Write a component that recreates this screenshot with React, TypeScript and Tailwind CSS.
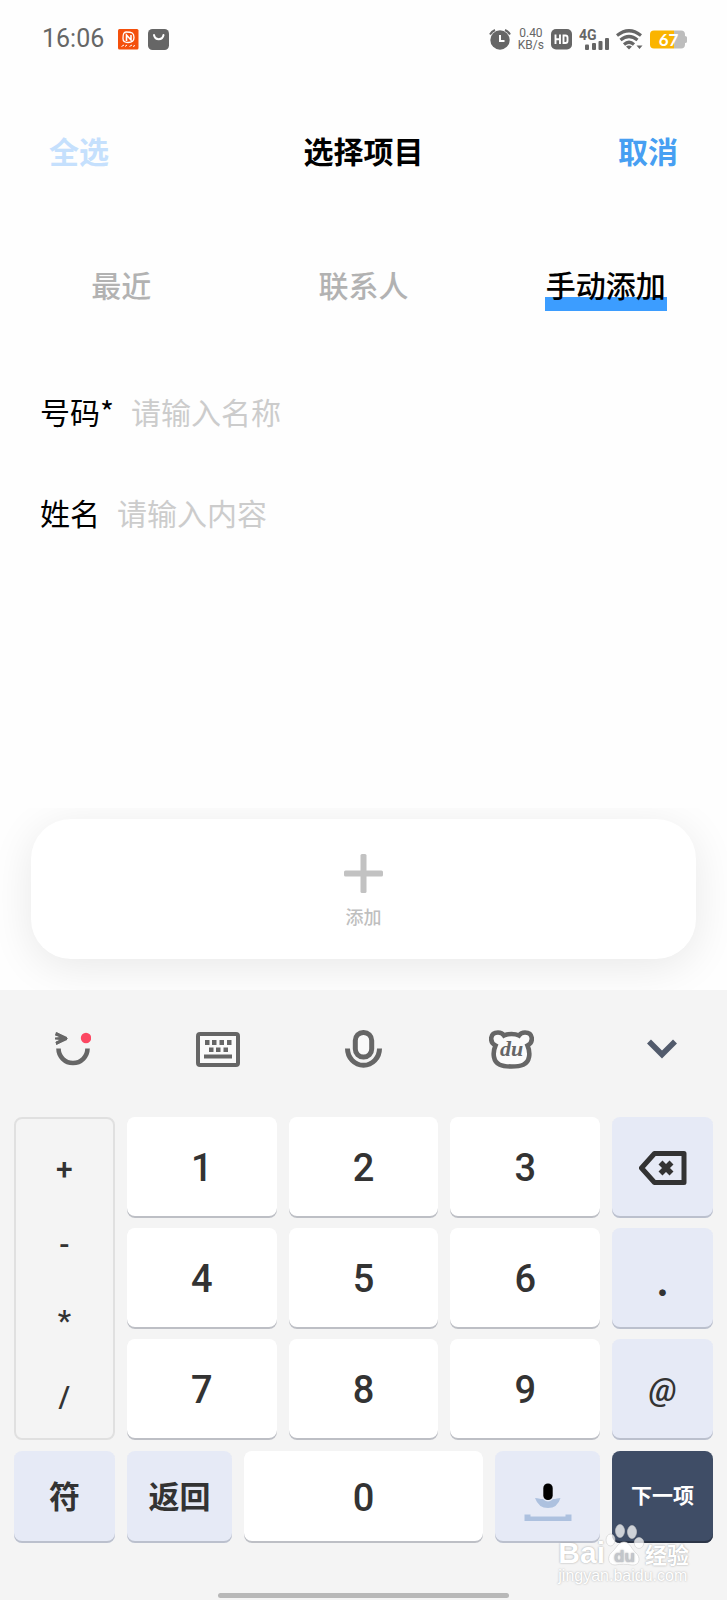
import type { ReactNode } from "react"
import clsx from "clsx"

const tabs = ["最近", "联系人", "手动添加"]
const digits = ["1", "2", "3", "4", "5", "6", "7", "8", "9"]
const operators = ["+", "-", "*", "/"]

type KeyProps = {
  children: ReactNode
  label?: string
  tone?: "light" | "tinted" | "dark"
  className?: string
}

function Key({ children, label, tone = "light", className }: KeyProps) {
  return (
    <button
      type="button"
      aria-label={label}
      className={clsx(
        "flex items-center justify-center rounded-lg",
        tone === "light" && "bg-white text-[#333] shadow-[inset_0_-2px_0_#bdbfc5]",
        tone === "tinted" && "bg-[#e6eaf6] text-[#333] shadow-[inset_0_-2px_0_#bbc0cd]",
        tone === "dark" && "bg-[#3f4d66] text-white shadow-[inset_0_-2px_0_#2c3547]",
        className,
      )}
    >
      {children}
    </button>
  )
}

function StatusBar() {
  return (
    <div className="flex h-[78px] items-center justify-between pl-[42px] pr-10 text-[#666]">
      <div className="flex items-center">
        <span className="font-[Roboto,sans-serif] text-[25px]">16:06</span>
        <svg className="ml-3.5" width="21" height="21" viewBox="0 0 21 21" fill="none">
          <rect width="20.5" height="20.5" rx="1.5" fill="#f4500c" />
          <path d="M8 3C5 3 5 7 5 9.500S7 13.500 10 13.500 16 13 16 8.500 14 3 8 3Z" stroke="#fff" strokeWidth="1.3" />
          <path d="M8.500 12V6L13 11V6" stroke="#fff" strokeWidth="1.6" />
          <path d="M3.500 17.500L6 16M7 17.500L9 16M11.500 17.500L14 16M15 17.500L17 16.500" stroke="#fff" strokeWidth="1" />
        </svg>
        <svg className="ml-[9px]" width="21" height="21" viewBox="0 0 21 21" fill="none">
          <rect width="21" height="21" rx="4.500" fill="#666" />
          <path d="M6 6C7 11.500 14.500 11.500 15.500 6" stroke="#fff" strokeWidth="2" strokeLinecap="round" />
        </svg>
      </div>
      <div className="flex items-center gap-[7px]">
        <svg width="22" height="21" viewBox="0 0 22 21" fill="none">
          <circle cx="11" cy="11" r="9.700" fill="#666" />
          <path d="M1 5.500Q2.500 2.500 6 1M21 5.500Q19.500 2.500 16 1" stroke="#666" strokeWidth="2" />
          <path d="M11 6v6h4.500" stroke="#fff" strokeWidth="2" />
        </svg>
        <span className="flex flex-col items-center font-[Roboto,sans-serif] text-[12px] leading-[12px]">
          <span>0.40</span>
          <span>KB/s</span>
        </span>
        <svg width="21" height="21" viewBox="0 0 21 21" fill="none">
          <rect width="21" height="20.500" rx="5" fill="#666" />
          <path d="M4.500 5.500v9.500M9 5.500v9.500M4.500 10.200H9M12.500 6.500h2q2 0 2 2v3.500q0 2-2 2h-2z" stroke="#fff" strokeWidth="1.900" />
        </svg>
        <svg width="30" height="28" viewBox="0 -4 30 28" fill="#666">
          <text x="0" y="11" fontFamily="Roboto, sans-serif" fontSize="14" fontWeight="700">4G</text>
          <rect x="6" y="15.500" width="4" height="5.500" rx="1" />
          <rect x="13" y="14" width="4" height="7" rx="1" />
          <rect x="19.500" y="12" width="4" height="9" rx="1" />
          <rect x="26" y="9" width="4" height="12" rx="1" />
        </svg>
        <svg width="27" height="21" viewBox="0 0 27 21" fill="none" stroke="#666" strokeWidth="3.200">
          <path d="M1 6.500Q13 -3 25 6.500M4.500 11Q13 4 21.500 11M8 15.500Q13 11 18 15.500" />
          <path d="M10 17.500q3-2 6 0l-3 3zM20.500 16.500h6l-3 3.500z" fill="#666" stroke="none" />
        </svg>
        <span className="relative flex h-[19px] w-[37px] items-center">
          <svg className="absolute inset-0" width="37" height="19" viewBox="0 0 37 19">
            <path d="M4 0.500H24V18.500H4Q0 18.500 0 14.500V4.500Q0 0.500 4 0.500Z" fill="#fab400" />
            <path d="M24 0.500H31Q35 0.500 35 4.500V6q2 0 2 1.500v4q0 1.500-2 1.500V14.500Q35 18.500 31 18.500H24Z" fill="#bdbdbd" />
          </svg>
          <span className="relative w-full text-center font-[Lato,sans-serif] text-[17px] font-bold leading-[19px] text-white">67</span>
        </span>
      </div>
    </div>
  )
}

function Toolbar() {
  return (
    <div className="grid h-[118px] grid-cols-[145fr_145fr_147fr_149fr_141fr] items-center text-[#666]">
      <button type="button" aria-label="表情" className="flex justify-center">
        <svg width="36" height="34" viewBox="0 0 36 34" fill="none">
          <path d="M1 0L12 5v3L1 13V9.500L5 8 0 7.500V5.500L5 5 0 3.500Z" fill="#666" />
          <path d="M1 1.500L10 6.500 1 11.500" stroke="#666" strokeWidth="3" />
          <circle cx="31" cy="6" r="5.200" fill="#fc4762" />
          <path d="M3.500 16.500a14.500 14.500 0 0 0 29 0" stroke="#666" strokeWidth="4.600" />
        </svg>
      </button>
      <button type="button" aria-label="键盘" className="flex justify-center">
        <svg width="44" height="35" viewBox="0 0 44 35" fill="#666">
          <rect x="2" y="2" width="40" height="31" rx="2" fill="#fafafa" stroke="#666" strokeWidth="4" />
          <path d="M9 8h4.500v5H9zM16 8h4.500v5H16zM23.500 8H28v5h-4.500zM31 8h4.500v5H31zM13 15.500h4.500v4.500H13zM20 15.500h4.500v4.500H20zM27.500 15.500H32v4.500h-4.500zM8 22.500h28v4H8z" />
        </svg>
      </button>
      <button type="button" aria-label="语音" className="flex justify-center">
        <svg width="37" height="38" viewBox="0 0 37 38" fill="none" stroke="#666" strokeWidth="5">
          <rect x="10.300" y="2.500" width="16.400" height="24.500" rx="8" fill="#fafafa" />
          <path d="M2.500 18.500a16 16.800 0 0 0 32 0" />
        </svg>
      </button>
      <button type="button" aria-label="百度输入法" className="flex justify-center">
        <svg width="45" height="39" viewBox="0 0 45 39">
          <path
            d="M6.500 15.500C0 12 1 2.500 9 2.500 12 2.500 14 4 15 5.500 19 3.500 26 3.500 30 5.500 31 4 33 2.500 36 2.500 44 2.500 45 12 38.500 15.500 40 19 41 22 40 27 38.500 35 32 36.500 22.500 36.500 13 36.500 6.500 35 5 27 4 22 5 19 6.500 15.500Z"
            fill="#fafafa"
            stroke="#666"
            strokeWidth="4.600"
          />
          <text x="22.500" y="26" textAnchor="middle" fill="#666" fontFamily="Liberation Serif, serif" fontSize="22" fontStyle="italic" fontWeight="700">du</text>
        </svg>
      </button>
      <button type="button" aria-label="收起键盘" className="flex justify-end pr-[50px]">
        <svg width="30" height="20" viewBox="0 0 30 20" fill="none">
          <path d="M2 2.500L15 15.500 28 2.500" stroke="#525b6c" strokeWidth="5.600" />
        </svg>
      </button>
    </div>
  )
}

function Keyboard() {
  return (
    <section className="bg-[#f4f4f4]">
      <Toolbar />
      <div className="grid grid-cols-[101fr_474fr_101fr] gap-x-3 px-3.5 pt-[9px] font-[Roboto,'Noto_Sans_CJK_SC',sans-serif]">
        <div className="grid grid-rows-4 rounded-lg border-2 border-[#e0e0e0] pb-1 pt-3 text-[30px] font-medium text-[#333]">
          {operators.map((op) => (
            <button key={op} type="button">
              {op}
            </button>
          ))}
        </div>
        <div className="grid auto-rows-[101px] grid-cols-3 gap-x-3 gap-y-2.5 text-[38px] font-medium">
          {digits.map((d) => (
            <Key key={d} className="pt-0.5">{d}</Key>
          ))}
        </div>
        <div className="grid auto-rows-[101px] gap-y-2.5 text-[32px] font-medium">
          <Key tone="tinted" label="删除">
            <svg width="48" height="34" viewBox="0 0 48 34" fill="none" stroke="#333" strokeWidth="5">
              <path d="M15.500 2.500L2.500 17 15.500 31.500H45V2.500Z" strokeLinejoin="round" />
              <path d="M21.500 11.500l11 11M32.500 11.500l-11 11" strokeWidth="5.600" />
            </svg>
          </Key>
          <Key tone="tinted" className="font-[Lato,sans-serif] text-[44px] font-bold">.</Key>
          <Key tone="tinted" className="italic">@</Key>
        </div>
      </div>
      <div className="grid h-[103px] grid-cols-[101fr_105fr_239fr_105fr_101fr] gap-x-3 px-3.5 pt-[11px] font-['Noto_Sans_CJK_SC',sans-serif] text-[31px] font-bold">
        <Key tone="tinted" className="pb-1">符</Key>
        <Key tone="tinted" className="pb-1">返回</Key>
        <Key className="pt-0.5 font-[Roboto,sans-serif] text-[38px] font-medium">0</Key>
        <Key tone="tinted" label="语音输入">
          <svg width="48" height="48" viewBox="0 0 48 48">
            <path d="M11 25q1.500 0 6 1l14 0q4.500-1 5.500-1-3 10-12.500 10T11 25Z" fill="#adc1df" />
            <rect x="18" y="9" width="12" height="19.500" rx="6" fill="#e6eaf6" />
            <rect x="19.300" y="10.500" width="9.400" height="16.500" rx="4.600" fill="#000" />
            <path d="M.5 41.500h6v2h35v-2h6V48H.500z" fill="#adc1df" />
          </svg>
        </Key>
        <Key tone="dark" className="pb-1 text-[21px]">下一项</Key>
      </div>
      <div className="flex h-[57px] items-end justify-center pb-0.5">
        <div className="h-[5px] w-2/5 rounded-full bg-[#b8b8b8]" />
      </div>
    </section>
  )
}

function Watermark() {
  return (
    <div className="pointer-events-none absolute bottom-[14px] right-[38px] font-['Liberation_Sans','Noto_Sans_CJK_SC',sans-serif] text-white">
      <div className="flex h-[44px] items-end leading-[26px] [text-shadow:0_0_2px_#999]">
        <span className="text-[30px] font-bold">Bai</span>
        <svg width="40" height="42" viewBox="0 0 40 42" fill="#fff" fillOpacity=".75" stroke="#ccc" strokeWidth=".6">
          <ellipse cx="5.500" cy="16" rx="4.500" ry="6" />
          <ellipse cx="15" cy="7" rx="4.500" ry="6.500" />
          <ellipse cx="27" cy="8" rx="4.500" ry="6.500" />
          <ellipse cx="34" cy="19" rx="4.800" ry="5.500" />
          <path d="M19 18c6 0 8 8 12 11 5 4 4 13-4 12-6-1-11-1-17 0-7 0-8-8-4-12 5-4 7-11 13-11Z" fillOpacity="1" />
          <text x="19.500" y="38" textAnchor="middle" fill="#c3c6cc" fillOpacity="1" stroke="none" fontFamily="Liberation Sans, sans-serif" fontSize="17" fontWeight="700">du</text>
        </svg>
        <span className="font-['Noto_Sans_CJK_SC',sans-serif] text-[22px] font-bold">经验</span>
      </div>
      <div className="text-[16px] leading-[20px] [text-shadow:0_0_2px_#aaa]">jingyan.baidu.com</div>
    </div>
  )
}

export default function App() {
  return (
    <div className="relative flex min-h-screen flex-col bg-[#fefefe] font-['Noto_Sans_CJK_SC',sans-serif]">
      <StatusBar />
      <header className="flex h-[144px] items-center justify-between px-[49px] text-[30px] font-bold">
        <button type="button" className="text-[#c5e0fd]">全选</button>
        <h1 className="text-black">选择项目</h1>
        <button type="button" className="text-[#479ff2]">取消</button>
      </header>
      <nav className="grid h-[124px] grid-cols-3 place-items-center text-[30px]">
        {tabs.map((tab) => {
          const active = tab === "手动添加"
          return (
            <button
              key={tab}
              type="button"
              className={clsx("relative px-px font-medium", active ? "text-black" : "text-[#b2b2b2]")}
            >
              {active && <span className="absolute inset-x-0 -bottom-1 h-3.5 bg-[#3c9dff]" />}
              <span className="relative">{tab}</span>
            </button>
          )
        })}
      </nav>
      <form className="grow px-10 pt-[15px] text-[30px]">
        <div className="flex h-[101px] items-center gap-[17px]">
          <label htmlFor="number">号码*</label>
          <input id="number" className="min-w-0 grow outline-none placeholder:text-[#ccc]" placeholder="请输入名称" />
        </div>
        <div className="flex h-[101px] items-center gap-[17px]">
          <label htmlFor="name">姓名</label>
          <input id="name" className="min-w-0 grow outline-none placeholder:text-[#ccc]" placeholder="请输入内容" />
        </div>
      </form>
      <div className="overflow-hidden px-[31px] pb-[31px] pt-[11px]">
        <button
          type="button"
          className="flex h-[140px] w-full flex-col items-center justify-center gap-2.5 rounded-[40px] bg-white pt-1.5 text-[18px] font-medium text-[#bfbfbf] shadow-[0_8px_44px_rgba(0,0,0,0.09)]"
        >
          <svg width="39" height="39" viewBox="0 0 39 39" fill="#c2c2c2">
            <rect x="16.500" width="6" height="39" rx="1.500" />
            <rect y="16.500" width="39" height="6" rx="1.500" />
          </svg>
          添加
        </button>
      </div>
      <Keyboard />
      <Watermark />
    </div>
  )
}
